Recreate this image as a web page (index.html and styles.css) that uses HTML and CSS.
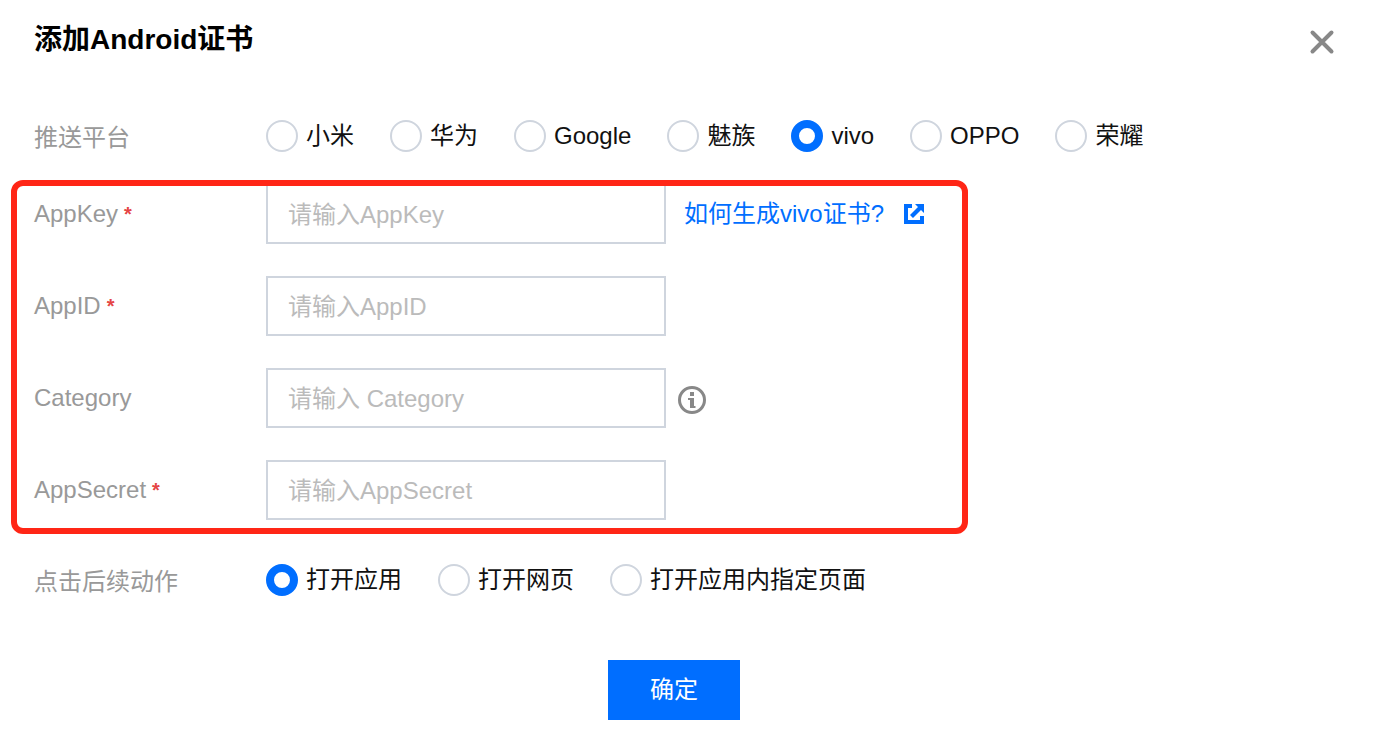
FILE: index.html
```html
<!DOCTYPE html>
<html lang="zh-CN">
<head>
    <meta charset="UTF-8">
    <meta name="viewport" content="width=device-width, initial-scale=1.0">
    <title>添加Android证书</title>
    <link rel="stylesheet" href="styles.css">
</head>
<body>
    <div class="dialog">
        <header class="dialog-header">
            <h1>添加Android证书</h1>
            <button class="close-button" type="button" aria-label="关闭">
                <svg width="26" height="26" viewBox="0 0 26 26">
                    <path d="M3.5 3.5L22.5 22.5M22.5 3.5L3.5 22.5" fill="none" stroke="#888" stroke-width="4" stroke-linecap="round"/>
                </svg>
            </button>
        </header>

        <form class="cert-form">
            <div class="form-row" role="radiogroup" aria-labelledby="platform-label">
                <span class="form-label group-label" id="platform-label">推送平台</span>
                <div class="radio-group">
                    <label class="radio"><input type="radio" name="platform" value="xiaomi">小米</label>
                    <label class="radio"><input type="radio" name="platform" value="huawei">华为</label>
                    <label class="radio"><input type="radio" name="platform" value="google">Google</label>
                    <label class="radio"><input type="radio" name="platform" value="meizu">魅族</label>
                    <label class="radio"><input type="radio" name="platform" value="vivo" checked>vivo</label>
                    <label class="radio"><input type="radio" name="platform" value="oppo">OPPO</label>
                    <label class="radio"><input type="radio" name="platform" value="honor">荣耀</label>
                </div>
            </div>

            <div class="highlight">
                <div class="form-row">
                    <label class="form-label" for="app-key">AppKey<span class="required">*</span></label>
                    <input class="text-input" type="text" id="app-key" placeholder="请输入AppKey">
                    <a class="help-link" href="#">如何生成vivo证书?
                        <svg width="20" height="20" viewBox="0 0 20 20" fill="#006eff">
                            <path d="M0 0H8V4H4V16H16V12H20V20H0Z"/>
                            <path d="M11 0H20V9L17 6L9 14L6 11L14 3Z"/>
                        </svg>
                    </a>
                </div>
                <div class="form-row">
                    <label class="form-label" for="app-id">AppID<span class="required">*</span></label>
                    <input class="text-input" type="text" id="app-id" placeholder="请输入AppID">
                </div>
                <div class="form-row">
                    <label class="form-label" for="category">Category</label>
                    <input class="text-input" type="text" id="category" placeholder="请输入 Category">
                    <button class="info-button" type="button" aria-label="说明">
                        <svg width="28" height="28" viewBox="0 0 28 28">
                            <circle cx="14" cy="14" r="12.5" fill="none" stroke="#888" stroke-width="3"/>
                            <path d="M12 6H16V10H12ZM10 12H16V20H17.500V22H12V14H10Z" fill="#888"/>
                        </svg>
                    </button>
                </div>
                <div class="form-row">
                    <label class="form-label" for="app-secret">AppSecret<span class="required">*</span></label>
                    <input class="text-input" type="text" id="app-secret" placeholder="请输入AppSecret">
                </div>
            </div>

            <div class="form-row" role="radiogroup" aria-labelledby="action-label">
                <span class="form-label group-label" id="action-label">点击后续动作</span>
                <div class="radio-group">
                    <label class="radio"><input type="radio" name="action" value="app" checked>打开应用</label>
                    <label class="radio"><input type="radio" name="action" value="web">打开网页</label>
                    <label class="radio"><input type="radio" name="action" value="page">打开应用内指定页面</label>
                </div>
            </div>

            <button class="submit-button" type="submit">确定</button>
        </form>
    </div>
</body>
</html>
```

FILE: styles.css
```css
* {
    margin: 0;
    padding: 0;
    box-sizing: border-box;
}

body {
    font-family: "Liberation Sans", "Noto Sans CJK SC", sans-serif;
    font-size: 24px;
    line-height: 32px;
    color: #111;
    background: #fff;
}

button,
input {
    font: inherit;
}

.dialog {
    padding: 20px 32px 28px 34px;
}

.dialog-header {
    display: flex;
    justify-content: space-between;
    align-items: center;
    height: 40px;
}

h1 {
    font-size: 28px;
    line-height: 40px;
    font-weight: bold;
    color: #000;
}

.close-button {
    display: flex;
    padding: 4px 13px 0;
    border: none;
    background: none;
    cursor: pointer;
}

.cert-form {
    display: flex;
    flex-direction: column;
    padding-top: 60px;
    padding-right: 34px;
}

.form-row {
    display: flex;
    align-items: center;
}

.form-label {
    flex: none;
    display: flex;
    width: 232px;
    color: #999;
}

.group-label {
    height: 32px;
    padding-top: 2px;
}

.required {
    padding-left: 6px;
    font-size: 20px;
    font-weight: bold;
    color: #e54545;
}

.radio-group {
    display: flex;
    flex-wrap: wrap;
    gap: 16px 36px;
}

.radio {
    display: flex;
    align-items: center;
    gap: 8px;
    cursor: pointer;
}

.radio input {
    appearance: none;
    width: 32px;
    height: 32px;
    border: 2px solid #cfd5de;
    border-radius: 50%;
    background: #fff;
}

.radio input:checked {
    border: 8px solid #006eff;
}

/* red frame around the vendor fields */
.highlight {
    position: relative;
    display: flex;
    flex-direction: column;
    gap: 32px;
    width: fit-content;
    margin: 32px 0 44px;
}

.highlight::after {
    content: "";
    position: absolute;
    inset: -4px -44px -14px -23px;
    border: 6px solid #ff2616;
    border-radius: 12px;
    pointer-events: none;
}

.text-input {
    width: 400px;
    height: 60px;
    padding: 2px 20px 0;
    border: 2px solid #cfd5de;
    color: #111;
    background: #fff;
}

.text-input::placeholder {
    color: #bbb;
    opacity: 1;
}

.help-link {
    display: flex;
    align-items: center;
    gap: 20px;
    margin-left: 18px;
    color: #006eff;
    text-decoration: none;
}

.info-button {
    display: flex;
    margin-left: 12px;
    padding-top: 4px;
    border: none;
    background: none;
    cursor: pointer;
}

.submit-button {
    align-self: center;
    width: 132px;
    height: 60px;
    margin-top: 64px;
    border: none;
    color: #fff;
    background: #006eff;
    cursor: pointer;
}
```
